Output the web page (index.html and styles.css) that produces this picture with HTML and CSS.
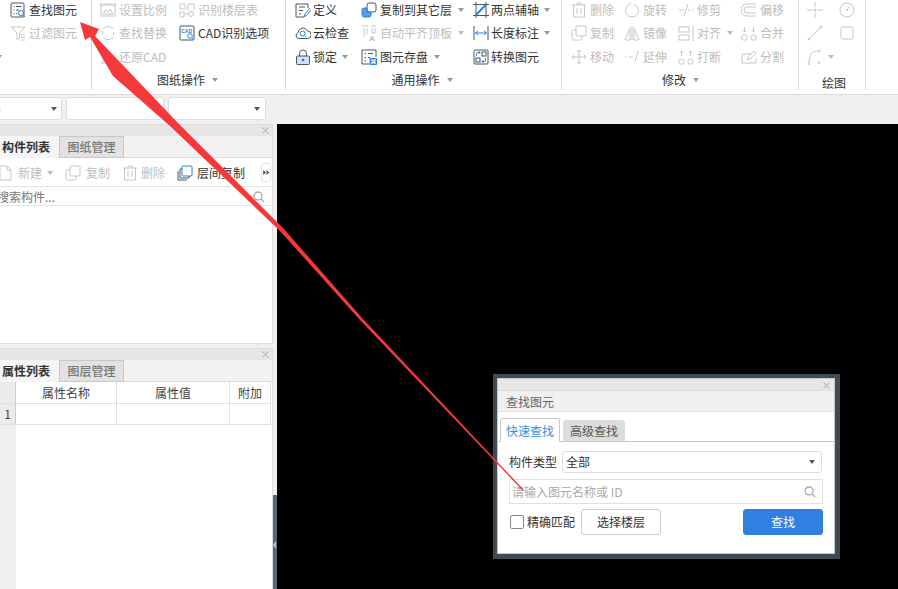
FILE: index.html
```html
<!DOCTYPE html>
<html lang="zh-CN">
<head>
<meta charset="utf-8">
<title>查找图元</title>
<link rel="stylesheet" href="styles.css">
</head>
<body>
<div class="app">
  <header class="ribbon">
    <section class="group g1">
      <div class="cells">
        <div class="cell"><svg class="ic" viewBox="0 0 16 16"><rect class="s" x="1" y="1" width="13" height="14" rx="1"/><path class="s" d="M3.500 4.500h1M6 4.500h5.500M3.500 8h1M6 8h3M3.500 11.500h1M6 11.500h1"/><circle class="b" cx="11" cy="11" r="2.500"/><path class="b" d="M13 13l2 2"/></svg><span>查找图元</span></div>
        <div class="cell off"><svg class="ic" viewBox="0 0 16 16"><path class="s" d="M1 2h14L9.500 8v5L7 15V8z"/><path class="s" d="M11 10h4M11 12.500h4M11 15h4"/></svg><span>过滤图元</span></div>
        <div class="cell"><i class="caret cut"></i></div>
      </div>
      <div class="glabel"></div>
    </section>
    <section class="group g2">
      <div class="cells">
        <div class="cell off"><svg class="ic" viewBox="0 0 16 16"><rect class="s" x="1" y="3" width="14" height="11"/><path class="s" d="M1 1v3M15 1v3M3 2h10M3 12l3-4 2 2 2-3 3 5z"/></svg><span>设置比例</span></div>
        <div class="cell off"><svg class="ic" viewBox="0 0 16 16"><path class="s" d="M1 2h5v5H1zM1 10h4v5H1zM9 2h6v6M9 2v6M5 12h4"/><circle class="s" cx="12" cy="12" r="2.500"/></svg><span>识别楼层表</span></div>
        <div class="cell off"><svg class="ic" viewBox="0 0 16 16"><path class="s" d="M3 4A7 7 0 0 1 13 3.500M13.500 12A7 7 0 0 1 3 12.500M2.500 6v3M13.500 7v3"/></svg><span>查找替换</span></div>
        <div class="cell"><svg class="ic" viewBox="0 0 16 16"><rect class="s" x="1" y="1" width="14" height="14" rx="1"/><text class="cadt" x="2.200" y="7.500">CAD</text><circle class="b" cx="11" cy="11" r="2.300"/><path class="b" d="M12.800 12.800l2 2"/></svg><span>CAD识别选项</span></div>
        <div class="cell off"><svg class="ic" viewBox="0 0 16 16"><path class="s" d="M1 14h14M3 14V7M11 14V9M3 9h8M6 1l-3 3"/></svg><span>还原CAD</span></div>
      </div>
      <div class="glabel label-g2">图纸操作<i class="caret"></i></div>
    </section>
    <section class="group g3">
      <div class="cells">
        <div class="cell"><svg class="ic" viewBox="0 0 16 16"><path class="s" d="M13 6V2H1v13h8"/><path class="s" d="M4 5h6M4 8.500h4M4 12h2"/><path class="b" d="M15 6l-5 6-1 2.500 2.500-1 5-6"/></svg><span>定义</span></div>
        <div class="cell"><svg class="ic" viewBox="0 0 16 16"><rect class="s" x="6" y="1" width="9" height="9" rx="2"/><path class="fb" d="M1 8a2 2 0 0 1 2-2h3v4h4v3a2 2 0 0 1-2 2H3a2 2 0 0 1-2-2z"/></svg><span>复制到其它层</span><i class="caret"></i></div>
        <div class="cell"><svg class="ic" viewBox="0 0 16 16"><path class="s" d="M3 0v16M13 0v16M0 13.500h16M0 2.500h16"/><path class="b thick" d="M3 13L13 2.500"/></svg><span>两点辅轴</span><i class="caret"></i></div>
        <div class="cell"><svg class="ic" viewBox="0 0 16 16"><path class="s" d="M4 13.500a3 3 0 0 1-1-5.800A5 5 0 0 1 12.500 6a3.500 3.500 0 0 1 0 7.500z"/><circle class="b" cx="7.500" cy="8.500" r="2.500"/><path class="b" d="M9.500 10.500l1.500 1.500"/></svg><span>云检查</span></div>
        <div class="cell off"><svg class="ic" viewBox="0 0 16 16"><path class="s" d="M1 1h6M3 3v9M6 3v7M10 1h5M11 3v5h3V3"/><text class="at" x="8" y="15.500">A</text></svg><span>自动平齐顶板</span><i class="caret"></i></div>
        <div class="cell"><svg class="ic" viewBox="0 0 16 16"><path class="s" d="M1 1v14M15 1v14"/><path class="b" d="M2.500 8h11M5 6L2.500 8 5 10M11 6l2.500 2L11 10"/></svg><span>长度标注</span><i class="caret"></i></div>
        <div class="cell"><svg class="ic" viewBox="0 0 16 16"><path class="s" d="M4.500 7V4.500a3.500 3.500 0 0 1 7 0V7"/><rect class="slock" x="1.500" y="7" width="13" height="8.500" rx="1"/><circle class="dot" cx="8" cy="11" r="1.300"/></svg><span>锁定</span><i class="caret"></i></div>
        <div class="cell"><svg class="ic" viewBox="0 0 16 16"><path class="s" d="M8 15H1V1h14v7"/><path class="s" d="M3.500 4.500h1.500M7 4.500h5M3.500 8.500h1.500M7 8.500h2M3.500 12h1.500"/><path class="fb" d="M9 9.500h6.500V15.500H9z"/><path class="w" d="M11 10v2h3v-2M11 15v-1.500h3V15"/></svg><span>图元存盘</span><i class="caret"></i></div>
        <div class="cell"><svg class="ic" viewBox="0 0 16 16"><rect class="s" x="1" y="1" width="14" height="14" rx="1"/><rect class="s" x="9" y="3" width="4" height="4"/><rect class="s" x="3" y="9" width="4" height="4"/><path class="b" d="M3.500 7V4.500a1 1 0 0 1 1-1H7M5.500 2L7 3.500 5.500 5M12.500 9v2.500a1 1 0 0 1-1 1H9M10.500 11L9 12.500l1.500 1.500"/></svg><span>转换图元</span></div>
      </div>
      <div class="glabel label-g3">通用操作<i class="caret"></i></div>
    </section>
    <section class="group g4">
      <div class="cells">
        <div class="cell off"><svg class="ic" viewBox="0 0 16 16"><path class="s" d="M1 3h14M6 3V1h4v2M2.500 3v12h11V3M6 6v6M10 6v6"/></svg><span>删除</span></div>
        <div class="cell off"><svg class="ic" viewBox="0 0 16 16"><path class="s" d="M6 2.300A6.500 6.500 0 1 0 10 2.300M6 .500L8 2.500"/></svg><span>旋转</span></div>
        <div class="cell off"><svg class="ic" viewBox="0 0 16 16"><path class="s" d="M1 8h5M10 8h2M14 8h1.500M6 14L10 2"/></svg><span>修剪</span></div>
        <div class="cell off"><svg class="ic" viewBox="0 0 16 16"><path class="s" d="M15 2H6a6 6 0 0 0 0 12h9M15 5H6a3 3 0 0 0 0 6h9"/></svg><span>偏移</span></div>
        <div class="cell off"><svg class="ic" viewBox="0 0 16 16"><rect class="s" x="5" y="1" width="10" height="10" rx="1"/><path class="s" d="M5 5H2.500A1.500 1.500 0 0 0 1 6.500v7A1.500 1.500 0 0 0 2.500 15h7a1.500 1.500 0 0 0 1.500-1.500V11"/></svg><span>复制</span></div>
        <div class="cell off"><svg class="ic" viewBox="0 0 16 16"><path class="s" d="M8 1v14M6 3L1 15h5zM10 3l5 12h-5z"/></svg><span>镜像</span></div>
        <div class="cell off"><svg class="ic" viewBox="0 0 16 16"><rect class="s" x="1" y="2" width="10" height="5"/><rect class="s" x="1" y="10" width="10" height="5"/><path class="s" d="M15 1v15"/></svg><span>对齐</span><i class="caret"></i></div>
        <div class="cell off"><svg class="ic" viewBox="0 0 16 16"><rect class="s" x="1" y="10" width="5" height="5" rx="1.500"/><rect class="s" x="10" y="10" width="5" height="5" rx="1.500"/><path class="s" d="M3.500 2v5M12.500 2v5M2 5.500L3.500 7 5 5.500M11 5.500L12.500 7 14 5.500"/></svg><span>合并</span></div>
        <div class="cell off"><svg class="ic" viewBox="0 0 16 16"><path class="s" d="M8 1v14M1 8h14M6 3l2-2 2 2M6 13l2 2 2-2M3 6L1 8l2 2M13 6l2 2-2 2"/></svg><span>移动</span></div>
        <div class="cell off"><svg class="ic" viewBox="0 0 16 16"><path class="s" d="M1 8h1.500M4.500 8h4M11 13L14 2"/></svg><span>延伸</span></div>
        <div class="cell off"><svg class="ic" viewBox="0 0 16 16"><rect class="s" x="1" y="10" width="5" height="5" rx="1.500"/><rect class="s" x="10" y="10" width="5" height="5" rx="1.500"/><path class="s" d="M3.500 7V2M12.500 7V2M2 3.500L3.500 2 5 3.500M11 3.500L12.500 2 14 3.500"/></svg><span>打断</span></div>
        <div class="cell off"><svg class="ic" viewBox="0 0 16 16"><path class="s" d="M15 9v5H1V5h9M6 11l1-3 6-6 2 2-6 6z"/></svg><span>分割</span></div>
      </div>
      <div class="glabel label-g4">修改<i class="caret"></i></div>
    </section>
    <section class="group g5">
      <div class="cells">
        <div class="cell off"><svg class="ic" viewBox="0 0 16 16"><path class="s" d="M0 8h5M11 8h5M8 0v5M8 11v5"/><circle class="dotg" cx="8" cy="8" r="1.500"/></svg></div>
        <div class="cell off"><svg class="ic" viewBox="0 0 16 16"><circle class="s" cx="8" cy="8" r="7"/><path class="s" d="M8 8l3-4"/><circle class="dotg" cx="8" cy="8" r="1"/></svg></div>
        <div class="cell off"><svg class="ic" viewBox="0 0 16 16"><path class="s" d="M2.500 13.500l11-11"/><circle class="s" cx="2" cy="14" r="1"/><circle class="s" cx="14" cy="2" r="1"/></svg></div>
        <div class="cell off"><svg class="ic" viewBox="0 0 16 16"><rect class="s" x="2" y="2" width="12" height="12" rx="1.500"/></svg></div>
        <div class="cell off"><svg class="ic" viewBox="0 0 16 16"><path class="s" d="M2 13C2 6 6 1.500 10 2"/><circle class="s" cx="2" cy="14.500" r="1"/><circle class="s" cx="12" cy="2" r="1"/><circle class="s" cx="12" cy="13.500" r="1"/></svg><i class="caret"></i></div>
      </div>
      <div class="glabel label-g5">绘图</div>
    </section>
  </header>

  <div class="selbar">
    <div class="sel sel-first"><span class="sel-cut">层</span><i class="caret dark"></i></div>
    <div class="sel"><i class="caret dark"></i></div>
    <div class="sel"><i class="caret dark"></i></div>
  </div>

  <main class="work">
    <aside class="side">
      <div class="panel panel-top">
        <div class="ptitle"><svg class="x" viewBox="0 0 8 8"><path d="M.5.500l7 7M7.500.500l-7 7"/></svg></div>
        <div class="tabs"><div class="tab on">构件列表</div><div class="tab">图纸管理</div></div>
        <div class="ptools">
          <div class="pt off newb"><svg class="ic" viewBox="0 0 16 16"><path class="s" d="M3 1h7l4 4v10H3zM10 1v4h4"/></svg><span>新建</span><i class="caret"></i></div>
          <div class="pt off copyb"><svg class="ic" viewBox="0 0 16 16"><rect class="s" x="5" y="1" width="10" height="10" rx="1"/><path class="s" d="M5 5H2.500A1.500 1.500 0 0 0 1 6.500v7A1.500 1.500 0 0 0 2.500 15h7a1.500 1.500 0 0 0 1.500-1.500V11"/></svg><span>复制</span></div>
          <div class="pt off delb"><svg class="ic" viewBox="0 0 16 16"><path class="s" d="M1 3h14M6 3V1h4v2M2.500 3v12h11V3M6 6v6M10 6v6"/></svg><span>删除</span></div>
          <div class="pt floorb"><svg class="ic" viewBox="0 0 16 16"><rect class="b" x="5" y="1" width="10" height="10" rx="1"/><path class="s" d="M5 4H3v9h9v-2M1 6v9h9"/></svg><span>层间复制</span></div>
          <div class="more"><svg viewBox="0 0 8 6"><path d="M0 0l3.500 3L0 6zM4 0l3.500 3L4 6z"/></svg></div>
        </div>
        <div class="psearch"><span>搜索构件...</span><svg class="mag" viewBox="0 0 12 12"><circle cx="5" cy="5" r="4"/><path d="M8 8l3 3"/></svg></div>
        <div class="pbody"></div>
      </div>
      <div class="panel panel-bottom">
        <div class="ptitle"><svg class="x" viewBox="0 0 8 8"><path d="M.5.500l7 7M7.500.500l-7 7"/></svg></div>
        <div class="tabs"><div class="tab on">属性列表</div><div class="tab">图层管理</div></div>
        <div class="ptable">
          <div class="th gut"></div><div class="th">属性名称</div><div class="th">属性值</div><div class="th">附加</div>
          <div class="td gut">1</div><div class="td"></div><div class="td"></div><div class="td"></div>
          <div class="rest"></div>
        </div>
      </div>
    </aside>
    <div class="split"><div class="split-top"></div><div class="split-grip"><i></i></div></div>
    <div class="canvas"></div>
  </main>

  <div class="dialog">
    <div class="dtop"><svg class="x" viewBox="0 0 8 8"><path d="M.5.500l7 7M7.500.500l-7 7"/></svg></div>
    <div class="dtitle">查找图元</div>
    <div class="dtabs"><div class="dtab on">快速查找</div><div class="dtab">高级查找</div></div>
    <div class="dbody">
      <div class="drow"><span class="dlab">构件类型</span><div class="dsel"><span>全部</span><i class="caret dark"></i></div></div>
      <div class="dinput"><span>请输入图元名称或 ID</span><svg class="mag" viewBox="0 0 12 12"><circle cx="5" cy="5" r="4"/><path d="M8 8l3 3"/></svg></div>
      <div class="dact"><i class="check"></i><span class="chk-l">精确匹配</span><button class="btn" type="button">选择楼层</button><button class="btn pri" type="button">查找</button></div>
    </div>
  </div>

  <svg class="arrow" viewBox="0 0 898 589"><polygon points="80,22 99,29 95,36 178,123 283,228 363,319 524,490 523,491 360,320 280,231 170,126 113,76 90,37 85,40"/></svg>
</div>
</body>
</html>
```
FILE: styles.css
```css
*{box-sizing:border-box}
html,body{margin:0;height:100%;overflow:hidden}
body{font:12px/16px "Noto Sans CJK SC","Liberation Sans",sans-serif;color:#333;background:#f0f0f0}
.app{position:relative;width:898px;height:589px;overflow:hidden;display:flex;flex-direction:column}
.ribbon{height:95px;flex:none;display:flex;background:#fff;border-bottom:1px solid #dcdcdc;padding-bottom:4px;overflow:hidden}
.group{height:92px;margin-top:-2px;flex:none;display:flex;flex-direction:column;border-right:1px solid #d9d9d9}
.cells{display:grid;grid-template-rows:24px 22px 26px;height:72px}
.cell{display:flex;align-items:center;gap:3px;white-space:nowrap}
.ic{width:16px;height:16px;flex:none}
.off{color:#bdbdbd}
.s,.b,.w{fill:none;stroke-width:1;stroke:#4c5563}
.off .s{stroke:#c6c6c6}
.b{stroke:#2f80e1}
.thick{stroke-width:2}
.w{stroke:#fff}
.fb{fill:#5b9ee8;stroke:#2f80e1}
.slock{fill:#cfe0f7;stroke:#4c5563}
.dot{fill:#2f70c8}
.dotg{fill:#c6c6c6}
.cadt{font:bold 5px "Liberation Sans",sans-serif;fill:#2f80e1}
.at{font:bold 8px "Liberation Sans",sans-serif;fill:#bdbdbd}
.caret{display:inline-block;width:0;height:0;margin-left:3px;border:3.500px solid transparent;border-top:4px solid #999;border-bottom:0}
.caret.dark{border-top-color:#555}
.caret.cut{margin-left:-14px}
.off .caret{border-top-color:#bbb}
.glabel{height:20px;display:flex;align-items:center;justify-content:center;color:#333}
.glabel .caret{margin-left:7px}
.g1{width:92px;padding-left:10px}
.g1 .cells{grid-template-columns:auto}
.g2{width:194px;padding-left:8px}
.g2 .cells{grid-template-columns:79px auto}
.label-g2{padding-right:10px}
.label-g3{padding-right:12px}
.label-g4{padding-right:8px}
.g3{width:276px;padding-left:9px}
.g3 .cells{grid-template-columns:66px 112px auto}
.g3 .cell{gap:2px}
.g3 .cell:nth-child(2),.g3 .cell:nth-child(5),.g3 .cell:nth-child(8){gap:3px}
.g4{width:237px;padding-left:9px}
.g4 .cells{grid-template-columns:53px 54px 63px auto}
.g5{width:67px;padding-left:8px}
.g5 .cells{grid-template-columns:32px 32px}
.g5 .cell .caret{margin-left:2px}
.label-g5{padding:5px 0 0;margin-left:-4px}
.selbar{height:29px;flex:none;display:flex;gap:4px;padding:2px 0 0;background:#f0f0f0;margin-left:-40px}
.sel{width:98px;height:23px;background:#fff;border:1px solid #ddd;border-radius:3px;display:flex;align-items:center;justify-content:flex-end;padding-right:5px}
.sel-first{width:102px;position:relative;padding-right:4px}
.sel-cut{position:absolute;left:28px;top:3px}
.work{flex:1;display:flex;min-height:0}
.side{width:273px;flex:none;display:flex;flex-direction:column;gap:4px;background:#f0f0f0}
.panel{background:#fff;border:1px solid #dcdcdc;border-width:1px 1px 1px 0;display:flex;flex-direction:column;overflow:hidden}
.panel-top{height:220px}
.panel-bottom{flex:1;border-bottom:0}
.ptitle{height:11px;flex:none;background:#e6e6e6;display:flex;justify-content:flex-end;align-items:center;padding-right:3px}
.x{width:7px;height:7px;flex:none;fill:none;stroke:#a0a0a0;stroke-width:1}
.tabs{height:22px;flex:none;display:flex;background:#f2f2f2;border-bottom:1px solid #ddd}
.tab{width:65px;height:22px;text-align:center;line-height:20px;color:#777;background:#e2e2e2;border:1px solid #c8c8c8;font-weight:500}
.tab.on{width:59px;background:#f5f5f5;border:0;color:#333;font-weight:700;text-align:left;padding-left:2px;line-height:22px}
.ptools{height:29px;flex:none;display:flex;align-items:center;padding-top:1px;border-bottom:1px solid #e3e3e3}
.pt{display:flex;align-items:center;gap:5px;white-space:nowrap}
.pt .caret{margin-left:0}
.newb{margin-left:-3px;width:68px}
.copyb{width:57px}
.delb{width:55px;gap:3px}
.floorb{gap:4px}
.more{width:10px;height:19px;margin-left:16px;border:1px solid #e3e3e3;border-radius:3px;background:#fff;display:flex;align-items:center;justify-content:center}
.more svg{width:7px;height:5px;flex:none;fill:#555}
.psearch{height:19px;flex:none;display:flex;align-items:center;justify-content:space-between;padding:1px 7px 0 0;border-bottom:1px solid #e3e3e3;color:#777}
.psearch span{margin-left:-3px}
.mag{width:12px;height:12px;fill:none;stroke:#aaa;stroke-width:1.300}
.pbody{flex:1}
.ptable{flex:1;display:grid;grid-template-columns:16px 101px 113px 41px;grid-template-rows:22px 21px 1fr;text-align:center;color:#444}
.th,.td{border:solid #e0e0e0;border-width:0 1px 1px 0;line-height:20px}
.th{padding-top:1px}
.gut{background:#ebebeb;border-right-color:#ccc}
.rest{grid-column:1/-1;background:linear-gradient(90deg,#f0f0f0 16px,#fff 16px)}
.split{width:4px;flex:none;display:flex;flex-direction:column;background:#f0f0f0}
.split-top{flex:1}
.split-grip{height:94px;padding-top:6px;background:#5b6672;display:flex;align-items:center}
.split-grip i{width:0;height:0;border:4px solid transparent;border-right:3px solid #c0c6cc;border-left:0}
.canvas{flex:1;background:#000}
.dialog{position:absolute;left:493px;top:374px;width:347px;height:185px;background:#fff;border:4px solid #3f4a54;border-right-width:5px;border-bottom-width:5px;display:flex;flex-direction:column;box-shadow:inset 0 0 0 1px #c8c8c8}
.dtop{height:12px;flex:none;margin:1px 1px 0;background:#e6e6e6;display:flex;justify-content:flex-end;align-items:center;padding:1px 4px 0 0;border-bottom:1px solid #ddd}
.dtitle{height:21px;flex:none;margin:0 1px;background:#f0f0f0;padding-left:8px;line-height:22px;color:#666;border-bottom:1px solid #e0e0e0}
.dtabs{height:30px;flex:none;display:flex;align-items:flex-end;gap:3px;padding-left:3px;border-bottom:1px solid #c8c8c8}
.dtab{width:62px;height:21px;line-height:21px;text-align:center;background:#ddd;color:#555;border-radius:3px 3px 0 0}
.dtab.on{width:60px;height:24px;margin-bottom:-1px;background:#fff;color:#3a8ee6;border:1px solid #c8c8c8;border-bottom:0;line-height:23px}
.dbody{flex:1;padding:9px 12px 0 12px;display:flex;flex-direction:column}
.drow{display:flex;align-items:center;gap:5px;height:22px}
.dsel{width:260px;height:22px;border:1px solid #ddd;border-radius:3px;display:flex;align-items:center;justify-content:space-between;padding:0 6px 0 3px}
.dinput{height:25px;margin-top:6px;border:1px solid #e0e0e0;display:flex;align-items:center;justify-content:space-between;padding:0 6px 0 2px;color:#aaa}
.dact{display:flex;align-items:center;height:26px;margin-top:5px}
.check{width:14px;height:14px;margin-left:1px;border:1px solid #888;border-radius:2px;flex:none}
.chk-l{margin-left:3px;width:54px}
.btn{width:80px;height:26px;padding:0;font:inherit;color:#333;background:#fff;border:1px solid #ccc;border-radius:3px}
.btn.pri{margin-left:82px;background:#2f80e1;border-color:#2f80e1;color:#fff}
.arrow{position:absolute;left:0;top:0;width:898px;height:589px;pointer-events:none}
.arrow polygon{fill:#f5393b}
```
